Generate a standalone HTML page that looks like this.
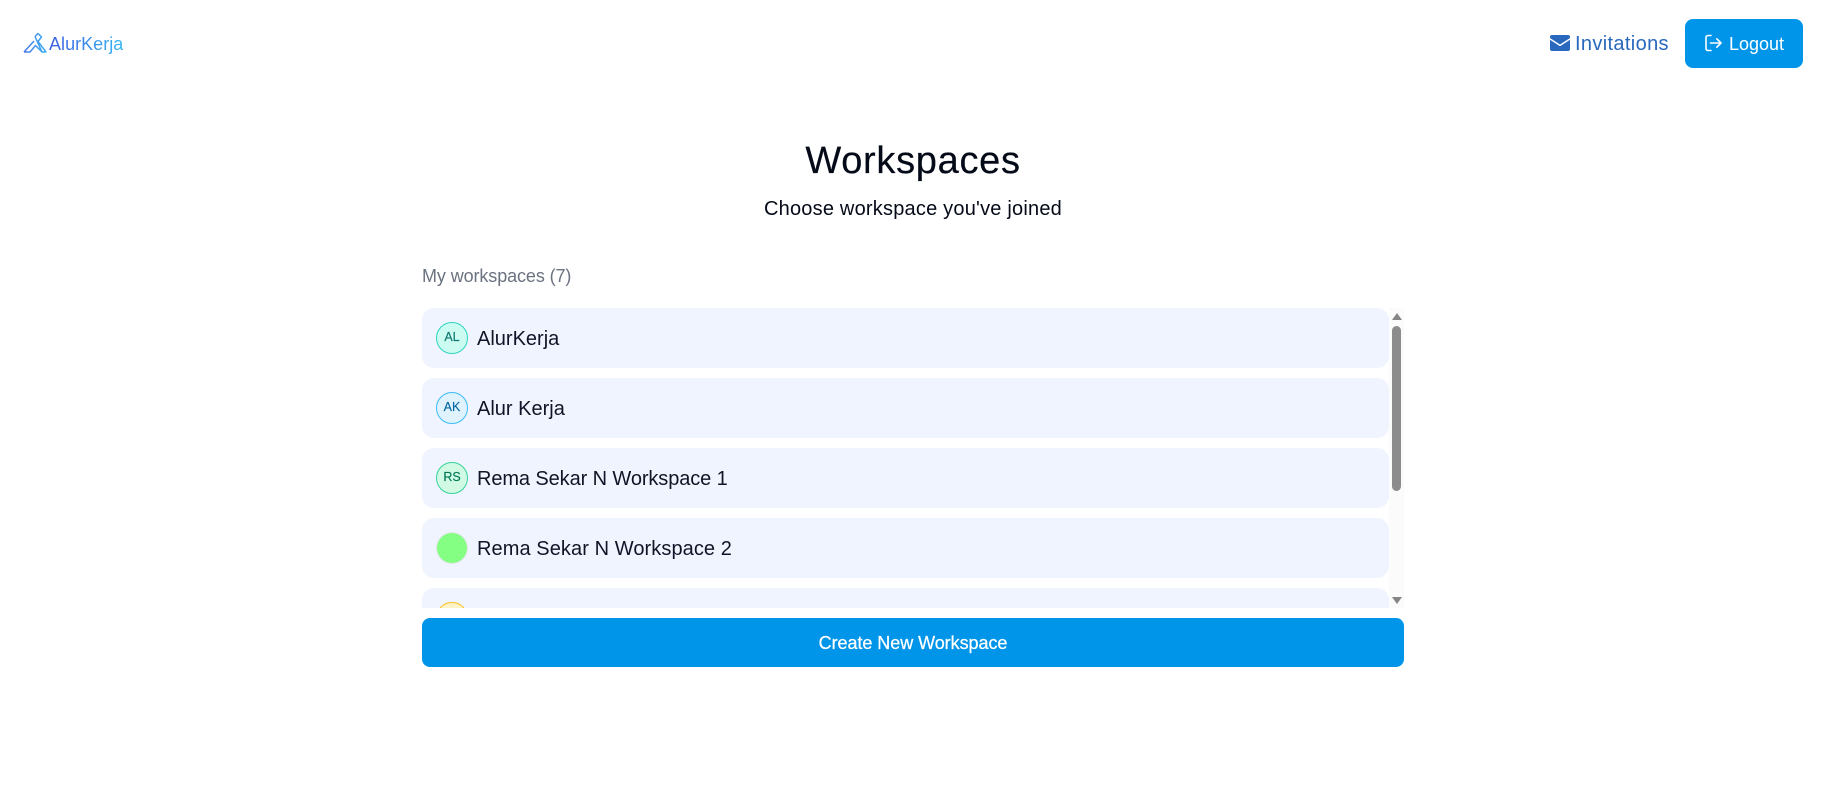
<!DOCTYPE html>
<html lang="en">
<head>
<meta charset="utf-8">
<title>Workspaces</title>
<style>
html,body{margin:0;padding:0;background:#fff;width:1832px;height:812px;overflow:hidden}
body{font-family:"Liberation Sans",sans-serif;position:relative}
.abs{position:absolute;white-space:nowrap}
.logo{left:49px;top:33px;line-height:23px;font-size:18px;letter-spacing:.03px;background:linear-gradient(90deg,#3b5fe0,#38b6f5);-webkit-background-clip:text;background-clip:text;color:transparent}
.inv{left:1575px;top:32px;line-height:24px;font-size:20px;letter-spacing:.35px;color:#2a68bd}
.logout{left:1685px;top:19px;width:118px;height:49px;background:#0095e9;border-radius:8px}
.logout span{position:absolute;left:44px;top:12.5px;line-height:24px;font-size:18px;color:#fff}
h1{margin:0;left:0;width:1826px;text-align:center;top:138px;line-height:46px;font-size:38px;font-weight:400;letter-spacing:.7px;color:#050a18;-webkit-text-stroke:.2px #050a18}
.sub{left:0;width:1826px;text-align:center;top:197px;line-height:24px;font-size:20px;letter-spacing:.21px;color:#050a18}
.my{left:422px;top:265px;line-height:22px;font-size:18px;letter-spacing:-.1px;color:#6b7280}
.list{left:422px;top:308px;width:982px;height:300px;overflow:hidden;background:#fff}
.track{position:absolute;left:967px;top:0;width:15px;height:300px;background:#fbfbfb}
.item{position:absolute;left:0;width:967px;height:60px;background:#f0f4fe;border-radius:12px;}
.av{position:absolute;left:14px;top:14px;width:32px;height:32px;box-sizing:border-box;border-radius:50%;border:1.3px solid;font-size:12.5px;text-align:center;line-height:28px;-webkit-text-stroke:.15px currentColor}
.name{position:absolute;left:55px;top:19px;line-height:24px;font-size:20px;color:#101426;white-space:nowrap}
.thumb{position:absolute;left:970px;top:18px;width:9px;height:165px;background:#8c8c8c;border-radius:5px}
.up,.down{position:absolute;left:969.5px;width:0;height:0;border-left:5px solid transparent;border-right:5px solid transparent}
.up{top:5px;border-bottom:7px solid #858585}
.down{top:289px;border-top:7px solid #858585}
.create{left:422px;top:619px;width:982px;height:49px;border-radius:8px;color:#fff;font-size:18px;letter-spacing:-.05px;line-height:49px;text-align:center;-webkit-text-stroke:.25px #fff}
.createbg{left:422px;top:618px;width:982px;height:49px;background:#0095e9;border-radius:8px}
</style>
</head>
<body>
<svg class="abs" style="left:22px;top:32px" width="26" height="23" viewBox="0 0 26 23" fill="none">
<defs><linearGradient id="g" gradientUnits="userSpaceOnUse" x1="0" x2="26" y1="0" y2="0"><stop offset="0" stop-color="#4a74e8"/><stop offset="1" stop-color="#3cb4f4"/></linearGradient></defs>
<path d="M2 20L12 9M13 4.5L16 1.5L19.5 5L16 9.5L24 20H20L13 4.5M2 20H8L13.5 13.5L20 20" stroke="url(#g)" stroke-width="1.5" stroke-linejoin="round"/>
</svg>
<div class="abs logo">AlurKerja</div>
<svg class="abs" style="left:1550px;top:35px" width="20" height="16" viewBox="0 0 20 16">
<path d="M2 0H18A2 2 0 0 1 20 2V3L10 9.5L0 3V2A2 2 0 0 1 2 0Z" fill="#2a68bd"/>
<path d="M0 4.8L10 11.2L20 4.8V14A2 2 0 0 1 18 16H2A2 2 0 0 1 0 14Z" fill="#2a68bd"/>
</svg>
<div class="abs inv">Invitations</div>
<div class="abs logout">
<svg style="position:absolute;left:19px;top:15px" width="19" height="19" viewBox="0 0 19 19" fill="none" stroke="#fff" stroke-width="1.6" stroke-linecap="round" stroke-linejoin="round">
<path d="M7 1.5H4A2 2 0 0 0 2 3.5V14.5A2 2 0 0 0 4 16.5H7"/>
<path d="M6.5 9H17M12.8 4.8L17 9L12.8 13.2"/>
</svg>
<span>Logout</span>
</div>
<h1 class="abs">Workspaces</h1>
<div class="abs sub">Choose workspace you've joined</div>
<div class="abs my">My workspaces (7)</div>
<div class="abs list">
<div class="track"></div>
<div class="item" style="top:0"><div class="av" style="background:#ccfbf1;border-color:#2dd4bf;color:#0f766e">AL</div><div class="name">AlurKerja</div></div>
<div class="item" style="top:70px"><div class="av" style="background:#e0f2fe;border-color:#38bdf8;color:#0369a1">AK</div><div class="name">Alur Kerja</div></div>
<div class="item" style="top:140px"><div class="av" style="background:#d1fae5;border-color:#34d399;color:#047857">RS</div><div class="name" style="letter-spacing:-.1px">Rema Sekar N Workspace 1</div></div>
<div class="item" style="top:210px"><div class="av" style="background:#84ff84;border-color:#e3e8ee"></div><div class="name" style="letter-spacing:.08px">Rema Sekar N Workspace 2</div></div>
<div class="item" style="top:280px"><div class="av" style="background:#fef3c7;border-color:#fbbf24;color:#b45309"></div></div>
<div class="up"></div><div class="thumb"></div><div class="down"></div>
</div>
<div class="abs createbg"></div>
<div class="abs create">Create New Workspace</div>
</body>
</html>
